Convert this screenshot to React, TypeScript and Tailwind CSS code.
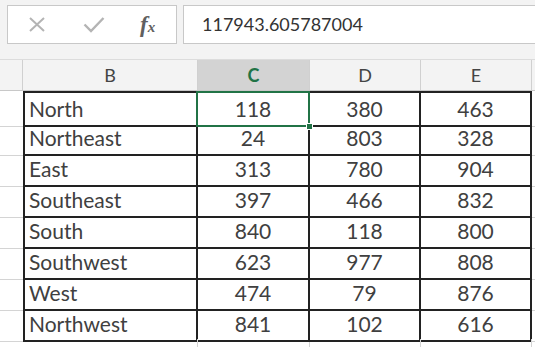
import React from 'react'

const rows: [string, number, number, number][] = [
  ['North', 118, 380, 463],
  ['Northeast', 24, 803, 328],
  ['East', 313, 780, 904],
  ['Southeast', 397, 466, 832],
  ['South', 840, 118, 800],
  ['Southwest', 623, 977, 808],
  ['West', 474, 79, 876],
  ['Northwest', 841, 102, 616],
]

const cols = 'grid grid-cols-[23px_175px_112px_111px_111px_1fr]'

export default function App() {
  return (
    <div className="w-[535px] h-[347px] overflow-hidden bg-[#f3f3f3] font-['Lato','Open_Sans',sans-serif] text-[#404040]">
      {/* Formula bar */}
      <div className="h-[59px] flex gap-[6px] pl-[7px] pt-[5px]">
        <div className="w-[170px] h-[39px] bg-white border border-[#c8c8c8] flex items-center">
          <svg width="18" height="15" viewBox="0 0 18 15" className="ml-[20px]">
            <path d="M2 1 L16 14 M16 1 L2 14" stroke="#b4b4b4" strokeWidth="2" />
          </svg>
          <svg width="22" height="17" viewBox="0 0 22 17" className="ml-[37px]">
            <path d="M1.5 8.5 L8 15 L20.5 2" stroke="#b4b4b4" strokeWidth="2.4" fill="none" />
          </svg>
          <span className="ml-[35px] font-['Liberation_Serif',serif] italic font-bold text-[#606060] text-[23px] leading-none">
            f<span className="text-[15px]">x</span>
          </span>
        </div>
        <div className="flex-1 -mr-[4px] h-[39px] bg-white border border-[#c8c8c8] flex items-center pl-[18px] text-[18px] text-[#333]">
          117943.605787004
        </div>
      </div>

      {/* Column headers */}
      <div className={`${cols} h-[32px] border-t border-[#dcdcdc] border-b border-b-[#c8c8c8] text-[18px] text-[#444]`}>
        <div className="border-r border-[#d0d0d0]" />
        <div className="border-r border-[#d0d0d0] flex items-center justify-center">B</div>
        <div className="border-r border-[#d0d0d0] bg-[#d3d3d3] flex items-center justify-center font-bold text-[#217346]">C</div>
        <div className="border-r border-[#d0d0d0] flex items-center justify-center">D</div>
        <div className="border-r border-[#d0d0d0] flex items-center justify-center">E</div>
        <div />
      </div>

      {/* Data */}
      <div className="bg-white text-[21px]">
        {rows.map(([name, c, d, e], i) => (
          <div key={name} className={`${cols} h-[31px]`}>
            <div className={`border-b border-[#d4d4d4] ${i === 0 ? 'border-t-2 border-t-white' : ''}`} />
            <div className={`border-x-2 border-b-2 border-[#222] flex items-center pl-[4px] ${i === 0 ? 'border-t-2' : ''}`}>
              {name}
            </div>
            <div className={`relative border-r-2 border-b-2 border-[#222] flex items-center justify-center ${i === 0 ? 'border-t-2 z-10' : ''}`}>
              {i === 0 && (
                <>
                  <div className="absolute -left-[2px] -top-[2px] -right-[2px] -bottom-[2px] border-2 border-[#217346]" />
                  <div className="absolute -right-[5px] -bottom-[5px] w-[7px] h-[7px] bg-[#217346] border border-white" />
                </>
              )}
              {c}
            </div>
            <div className={`border-r-2 border-b-2 border-[#222] flex items-center justify-center ${i === 0 ? 'border-t-2' : ''}`}>
              {d}
            </div>
            <div className={`border-r-2 border-b-2 border-[#222] flex items-center justify-center ${i === 0 ? 'border-t-2' : ''}`}>
              {e}
            </div>
            <div className="border-b border-[#d4d4d4]" />
          </div>
        ))}
        <div className={`${cols} h-[20px]`}>
          <div />
          <div className="border-r border-[#d4d4d4]" />
          <div className="border-r border-[#d4d4d4]" />
          <div className="border-r border-[#d4d4d4]" />
          <div className="border-r border-[#d4d4d4]" />
          <div />
        </div>
      </div>
    </div>
  )
}
